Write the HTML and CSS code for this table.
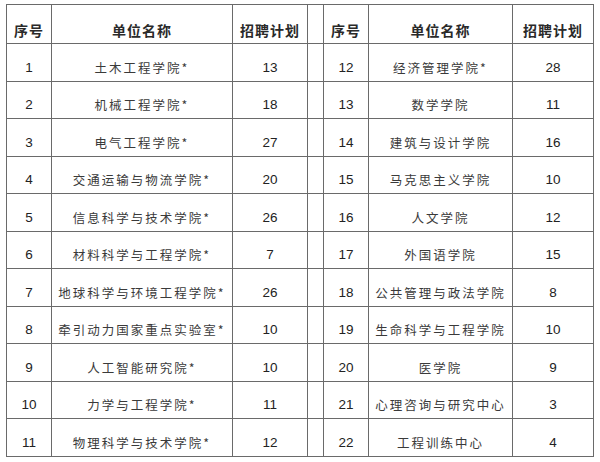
FILE: index.html
```html
<!DOCTYPE html>
<html lang="zh">
<head>
<meta charset="utf-8">
<link rel="stylesheet" href="styles.css">
</head>
<body>
<table class="plan">
<colgroup>
<col class="c-no"><col class="c-name1"><col class="c-num1"><col class="c-gap"><col class="c-no"><col class="c-name2"><col class="c-num2">
</colgroup>
<thead>
<tr><th>序号</th><th>单位名称</th><th>招聘计划</th><th class="gap"></th><th>序号</th><th>单位名称</th><th>招聘计划</th></tr>
</thead>
<tbody>
<tr><td class="n">1</td><td class="u">土木工程学院*</td><td class="n">13</td><td class="gap"></td><td class="n">12</td><td class="u">经济管理学院*</td><td class="n">28</td></tr>
<tr><td class="n">2</td><td class="u">机械工程学院*</td><td class="n">18</td><td class="gap"></td><td class="n">13</td><td class="u">数学学院</td><td class="n">11</td></tr>
<tr><td class="n">3</td><td class="u">电气工程学院*</td><td class="n">27</td><td class="gap"></td><td class="n">14</td><td class="u">建筑与设计学院</td><td class="n">16</td></tr>
<tr><td class="n">4</td><td class="u">交通运输与物流学院*</td><td class="n">20</td><td class="gap"></td><td class="n">15</td><td class="u">马克思主义学院</td><td class="n">10</td></tr>
<tr><td class="n">5</td><td class="u">信息科学与技术学院*</td><td class="n">26</td><td class="gap"></td><td class="n">16</td><td class="u">人文学院</td><td class="n">12</td></tr>
<tr><td class="n">6</td><td class="u">材料科学与工程学院*</td><td class="n">7</td><td class="gap"></td><td class="n">17</td><td class="u">外国语学院</td><td class="n">15</td></tr>
<tr><td class="n">7</td><td class="u">地球科学与环境工程学院*</td><td class="n">26</td><td class="gap"></td><td class="n">18</td><td class="u">公共管理与政法学院</td><td class="n">8</td></tr>
<tr><td class="n">8</td><td class="u">牵引动力国家重点实验室*</td><td class="n">10</td><td class="gap"></td><td class="n">19</td><td class="u">生命科学与工程学院</td><td class="n">10</td></tr>
<tr><td class="n">9</td><td class="u">人工智能研究院*</td><td class="n">10</td><td class="gap"></td><td class="n">20</td><td class="u">医学院</td><td class="n">9</td></tr>
<tr><td class="n">10</td><td class="u">力学与工程学院*</td><td class="n">11</td><td class="gap"></td><td class="n">21</td><td class="u">心理咨询与研究中心</td><td class="n">3</td></tr>
<tr><td class="n">11</td><td class="u">物理科学与技术学院*</td><td class="n">12</td><td class="gap"></td><td class="n">22</td><td class="u">工程训练中心</td><td class="n">4</td></tr>
</tbody>
</table>
</body>
</html>
```

FILE: styles.css
```css
html, body {
  margin: 0;
  padding: 0;
  background: #ffffff;
}
body {
  padding: 4px 0 0 6px;
}
.plan {
  border-collapse: collapse;
  table-layout: fixed;
  width: 588px;
  color: #333333;
  font-family: "Noto Sans CJK SC", "Noto Sans", sans-serif;
}
.c-no { width: 45px; }
.c-name1 { width: 181px; }
.c-num1 { width: 75px; }
.c-gap { width: 16px; }
.c-name2 { width: 144px; }
.c-num2 { width: 81px; }
.plan th, .plan td {
  border: 1.5px solid #6a6a6a;
  padding: 0;
  text-align: center;
  vertical-align: middle;
  overflow: hidden;
  white-space: nowrap;
}
.plan thead tr { height: 39px; }
.plan tbody tr { height: 37.5px; }
.plan th {
  font-size: 14px;
  font-weight: 700;
  letter-spacing: 1px;
  color: #2a2a2a;
  padding-top: 12px;
}
.plan td.u {
  font-size: 12.5px;
  letter-spacing: 2px;
  color: #3a3a3a;
  padding-top: 10px;
}
.plan td.n {
  font-family: "Liberation Sans", Arial, sans-serif;
  font-size: 13.5px;
  color: #222222;
  padding-top: 10px;
}
```
